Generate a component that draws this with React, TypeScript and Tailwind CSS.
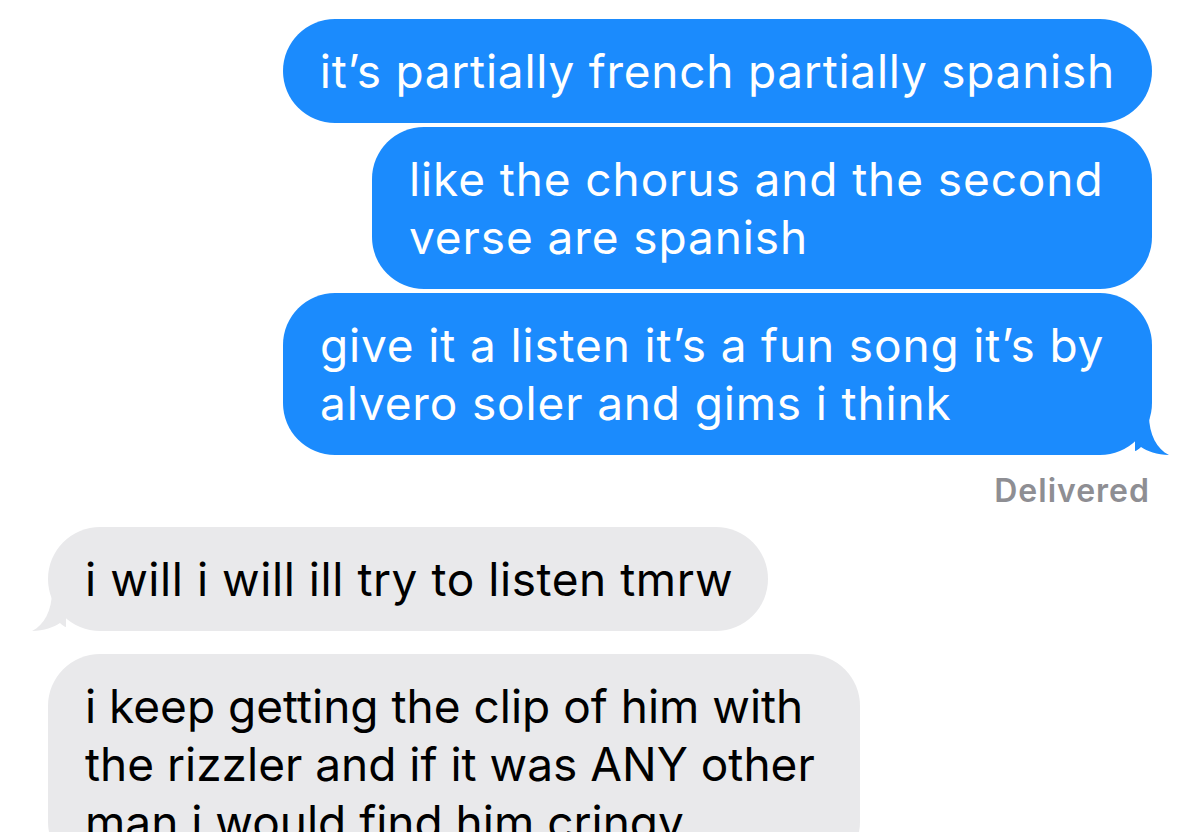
import React from 'react';

const font = { fontFamily: 'Inter, "Noto Sans", sans-serif' };

// tail drawn below the corner of the last bubble in a group
const BlueTail = () => (
  <svg className="absolute -right-[17px] bottom-0" width="34" height="40" viewBox="0 0 34 40">
    <path d="M0 0 H14 C14 20 22 34 34 40 C22 40 12 36 6 32 C4 34 1 36 0 36 Z" fill="#1b8bfd" />
  </svg>
);

const GrayTail = () => (
  <svg className="absolute -left-[16px] bottom-0" width="34" height="40" viewBox="0 0 34 40">
    <path d="M34 0 H20 C20 20 12 34 0 40 C12 40 22 36 28 32 C30 34 33 36 34 36 Z" fill="#e9e9eb" />
  </svg>
);

type BubbleProps = { lines: string[]; tail?: boolean; className?: string };

const Sent = ({ lines, tail, className = 'w-fit' }: BubbleProps) => (
  <div className={`relative self-end rounded-[52px] bg-[#1b8bfd] px-[37px] py-[23px] text-white ${className}`}>
    {lines.map((l, i) => (
      <div key={i} className="whitespace-nowrap">{l}</div>
    ))}
    {tail && <BlueTail />}
  </div>
);

const Received = ({ lines, tail, className = 'w-fit' }: BubbleProps) => (
  <div className={`relative rounded-[52px] bg-[#e9e9eb] px-[37px] py-[23px] text-black ${className}`}>
    {lines.map((l, i) => (
      <div key={i} className="whitespace-nowrap">{l}</div>
    ))}
    {tail && <GrayTail />}
  </div>
);

export default function App() {
  return (
    <div className="h-[832px] w-[1200px] overflow-hidden bg-white" style={font}>
      <div className="flex flex-col gap-[4px] px-[48px] pt-[19px] text-[46px] leading-[58px] tracking-[0.75px]">
        <Sent lines={['it’s partially french partially spanish']} />
        <Sent lines={['like the chorus and the second', 'verse are spanish']} className="w-[780px] tracking-[0.9px]" />
        <Sent
          lines={['give it a listen it’s a fun song it’s by', 'alvero soler and gims i think']}
          className="w-[869px] tracking-[0.85px]"
          tail
        />
        <div className="mt-[12px] self-end pr-[2px] text-[32px] font-semibold leading-[40px] tracking-[1px] text-[#8e8e93]">Delivered</div>
        <div className="mt-[12px]">
          <Received lines={['i will i will ill try to listen tmrw']} className="w-[720px] tracking-[0.55px]" tail />
        </div>
        <div className="mt-[19px]">
          <Received
            lines={[
              'i keep getting the clip of him with',
              'the rizzler and if it was ANY other',
              'man i would find him cringy',
            ]}
            className="w-[812px] tracking-[0px]"
          />
        </div>
      </div>
    </div>
  );
}
